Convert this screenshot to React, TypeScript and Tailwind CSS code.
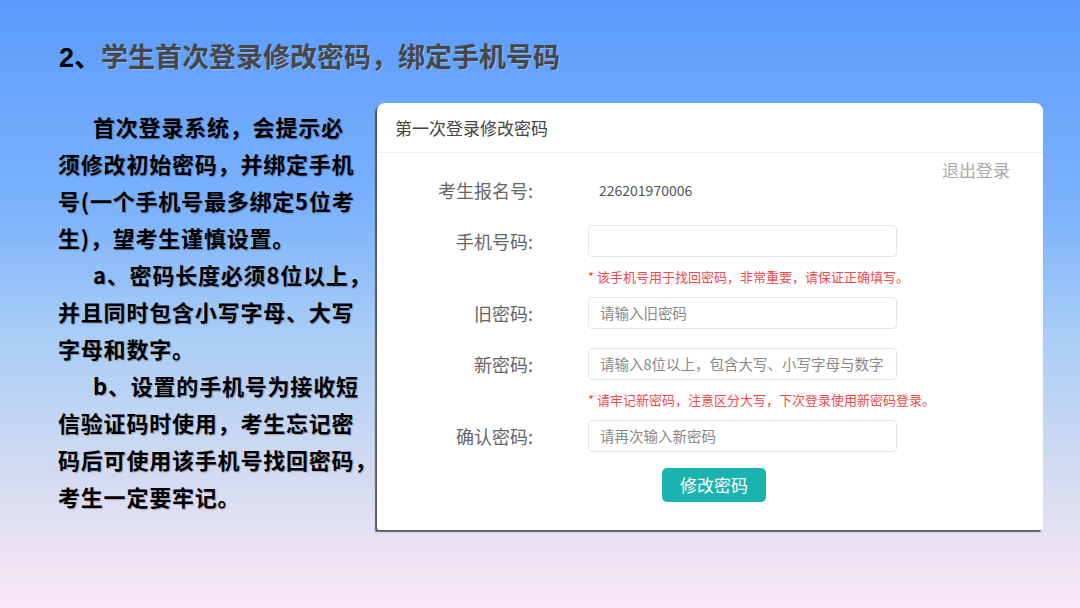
const cjk = '"Noto Sans CJK SC", "Noto Sans", sans-serif'

const Field = ({ label, placeholder }: { label: string; placeholder?: string }) => (
  <div className="flex items-center h-[32px]">
    <div className="w-[156px] text-right text-[18px] text-[#666]">{label}</div>
    <div className="ml-[55px] w-[309px] h-[32px] border border-[#e6e6e6] rounded-[4px] bg-white flex items-center pl-[11px] text-[14.5px] text-[#888]">
      {placeholder}
    </div>
  </div>
)

const Hint = ({ text }: { text: string }) => (
  <div className="h-[40px] flex items-center pl-[211px] text-[13px] text-[#f5474c]">{text}</div>
)

export default function App() {
  const lines = [
    { t: '首次登录系统，会提示必', indent: true },
    { t: '须修改初始密码，并绑定手机' },
    { t: '号(一个手机号最多绑定5位考' },
    { t: '生)，望考生谨慎设置。' },
    { t: 'a、密码长度必须8位以上，', indent: true },
    { t: '并且同时包含小写字母、大写' },
    { t: '字母和数字。' },
    { t: 'b、设置的手机号为接收短', indent: true },
    { t: '信验证码时使用，考生忘记密' },
    { t: '码后可使用该手机号找回密码，' },
    { t: '考生一定要牢记。' }
  ]

  return (
    <div
      className="w-[1080px] h-[608px] overflow-hidden bg-[linear-gradient(180deg,#5b9bfd_0%,#7db3fb_35%,#a9cdf6_55%,#d3dbf1_78%,#fce8f6_100%)]"
      style={{ fontFamily: cjk }}
    >
      {/* Title */}
      <div className="pt-[38px] pl-[59px] h-[74px] text-[27px] leading-[36px] font-bold whitespace-nowrap">
        <span className="text-black" style={{ fontFamily: '"Liberation Sans", "Noto Sans CJK SC", sans-serif' }}>2、</span>
        <span className="text-[#474747] [text-shadow:1px_1px_0_rgba(255,255,255,0.25)]">学生首次登录修改密码，绑定手机号码</span>
      </div>

      <div className="flex items-start mt-[29px]">
        {/* Left text */}
        <div className="w-[377px] pl-[58px] pt-[5px] text-[22px] leading-[37px] font-bold text-black tracking-[0.8px] whitespace-nowrap [text-shadow:1px_1px_1px_rgba(0,0,0,0.25)]">
          {lines.map((l, i) => (
            <div key={i} className={l.indent ? 'pl-[35px]' : ''}>
              {l.t}
            </div>
          ))}
        </div>

        {/* Card */}
        <div className="w-[666px] h-[427px] bg-white rounded-t-[8px] rounded-b-[2px] shadow-[-2px_2px_1px_rgba(70,70,70,0.85)]">
          <div className="h-[50px] border-b border-[#eeeeee] flex items-center pl-[18px] text-[17px] text-[#444]">
            第一次登录修改密码
          </div>
          <div className="pt-[6px]">
            <div className="h-[22px] flex justify-end pr-[33px] text-[17px] leading-[22px] text-[#aaa]">退出登录</div>
            <div className="-mt-[7px] flex flex-col">
              <div className="flex items-center h-[32px]">
                <div className="w-[156px] text-right text-[18px] text-[#666]">考生报名号:</div>
                <div className="ml-[66px] text-[14px] text-[#555]">226201970006</div>
              </div>
              <div className="h-[19px]" />
              <Field label="手机号码:" />
              <Hint text="* 该手机号用于找回密码，非常重要，请保证正确填写。" />
              <Field label="旧密码:" placeholder="请输入旧密码" />
              <div className="h-[19px]" />
              <Field label="新密码:" placeholder="请输入8位以上，包含大写、小写字母与数字" />
              <Hint text="* 请牢记新密码，注意区分大写，下次登录使用新密码登录。" />
              <Field label="确认密码:" placeholder="请再次输入新密码" />
              <div className="flex justify-center pl-[8px] mt-[16px]">
                <button className="w-[104px] h-[34px] rounded-[5px] bg-[#1bb3ad] text-white text-[17px]">修改密码</button>
              </div>
            </div>
          </div>
        </div>
      </div>
    </div>
  )
}
